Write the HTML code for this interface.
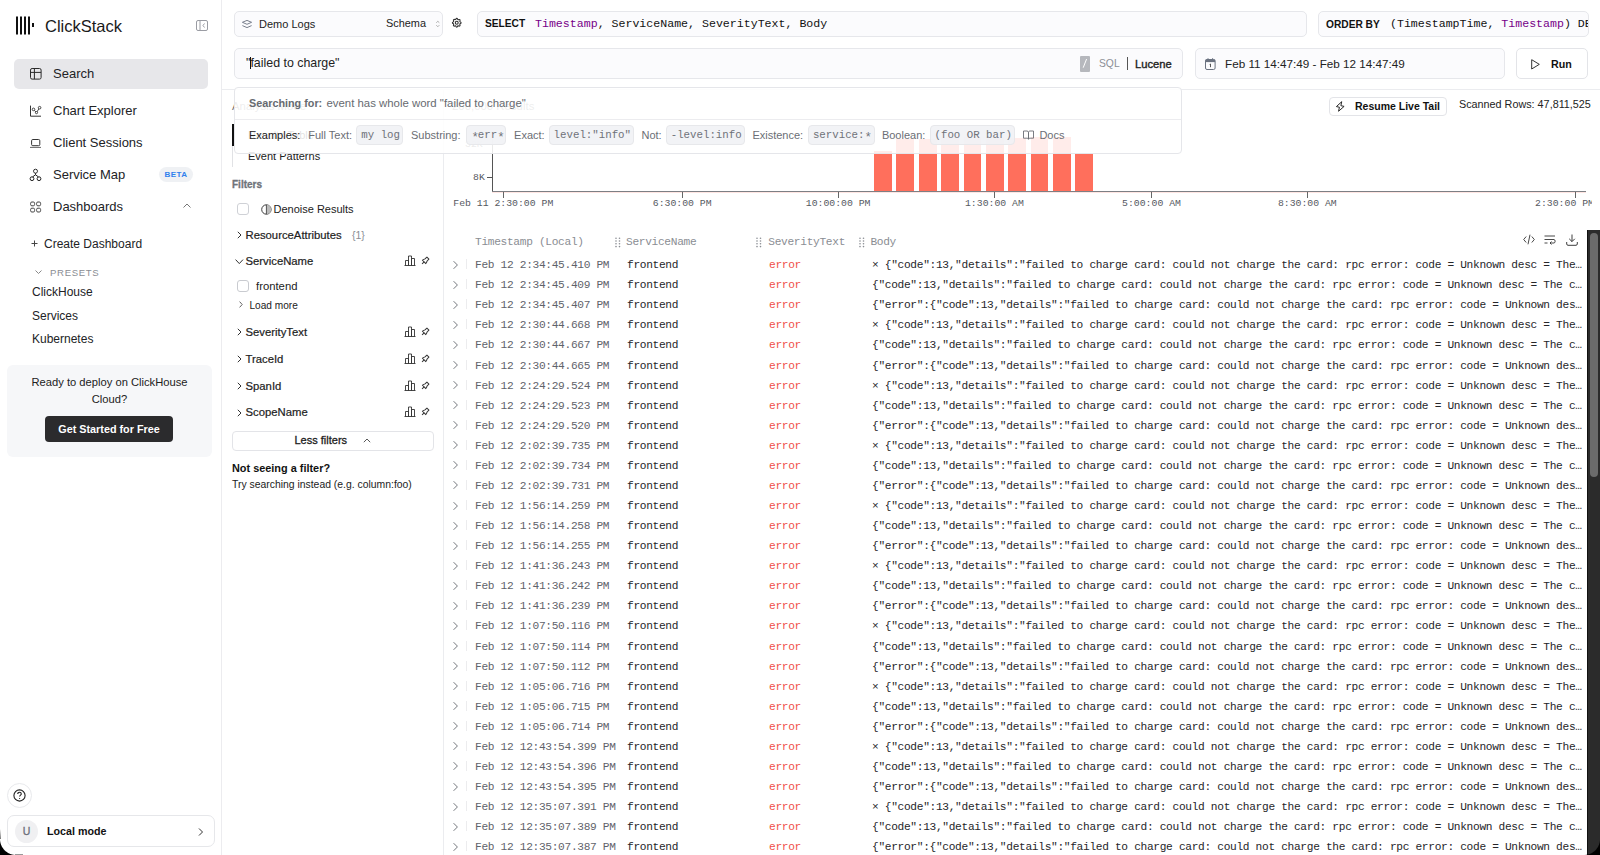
<!DOCTYPE html>
<html><head><meta charset="utf-8"><title>ClickStack Search</title>
<style>
*{box-sizing:border-box;margin:0;padding:0}
html,body{width:1600px;height:855px;overflow:hidden;background:#fff}
body{position:relative;font-family:"Liberation Sans",sans-serif;color:#1f1f22}
.a{position:absolute;white-space:nowrap}
.t{position:absolute;white-space:nowrap;line-height:16px;height:16px}
.mono{font-family:"Liberation Mono",monospace}
.med{-webkit-text-stroke:.25px currentColor}
svg{position:absolute;overflow:visible}
/* sidebar */
#side{position:absolute;left:0;top:0;width:222px;height:855px;border-right:1px solid #ececef;background:#fff}
.nav{font-size:13px;color:#222326}
.sub{font-size:12px;color:#222326}
/* header boxes */
.box{position:absolute;background:#fbfbfd;border:1px solid #e6e7eb;border-radius:5px}
/* rows */
.row{position:absolute;left:444px;width:1143px;height:20px;font-family:"Liberation Mono",monospace;font-size:11.2px;letter-spacing:-.32px;line-height:20px}
.row span{position:absolute;top:0;white-space:nowrap}
.rchev{left:8.5px;top:4.5px}
.rdiv{position:absolute;left:22px;top:4px;width:1px;height:10px;background:#ececee}
.ts{left:31px;color:#5f636b}
.sv{left:183px;color:#26262a}
.er{left:325px;color:#f0504a}
.bd{left:428px;color:#26262a}
.bar{position:absolute;width:17.8px;background:#ff6f5c}
.tick{position:absolute;top:192px;width:1px;height:6px;background:#666}
.tlab{position:absolute;top:197px;transform:translateX(-50%);font-family:"Liberation Mono",monospace;font-size:9.8px;color:#56595f;line-height:14px;white-space:nowrap}
</style></head>
<body>
<!-- SIDEBAR -->
<div id="side">
  <svg style="left:16px;top:16px" width="20" height="19" viewBox="0 0 20 19">
    <rect x="0" y="0.5" width="2" height="18" fill="#111"/>
    <rect x="4" y="0.5" width="2" height="18" fill="#111"/>
    <rect x="8" y="0.5" width="2" height="18" fill="#111"/>
    <rect x="12" y="0.5" width="2" height="18" fill="#111"/>
    <rect x="16" y="7" width="2" height="4" fill="#111"/>
  </svg>
  <div class="t" style="left:45px;top:17px;font-size:16.5px;line-height:18px;height:18px;color:#1a1a1a">ClickStack</div>
  <svg style="left:196px;top:20px" width="12" height="11" viewBox="0 0 12 11"><rect x="0.5" y="0.5" width="11" height="10" rx="1.5" fill="none" stroke="#9a9ca3" stroke-width="1"/><line x1="4" y1="1" x2="4" y2="10" stroke="#9a9ca3"/><path d="M8.5 3.5L7 5.5L8.5 7.5" fill="none" stroke="#9a9ca3"/></svg>

  <div class="a" style="left:14px;top:59px;width:194px;height:30px;background:#e7e7ea;border-radius:5px"></div>
  <svg style="left:30px;top:68px" width="12" height="12" viewBox="0 0 12 12"><rect x="0.5" y="0.5" width="10.6" height="10.6" rx="1.6" fill="none" stroke="#2a2a2a" stroke-width="1"/><line x1="0.5" y1="4.4" x2="11.1" y2="4.4" stroke="#2a2a2a"/><line x1="4.4" y1="0.5" x2="4.4" y2="11.1" stroke="#2a2a2a"/></svg>
  <div class="t nav" style="left:53px;top:66px">Search</div>

  <svg style="left:30px;top:105px" width="12" height="12" viewBox="0 0 12 12"><path d="M0.5 0.6V11.2H11" fill="none" stroke="#333" stroke-width="1"/><path d="M3.5 4.4L6.5 7.6L9.6 2.7" fill="none" stroke="#333" stroke-width=".9"/><circle cx="3.5" cy="4.4" r="1.3" fill="#fff" stroke="#333" stroke-width=".9"/><circle cx="6.5" cy="7.6" r="1.1" fill="#fff" stroke="#333" stroke-width=".9"/><circle cx="9.6" cy="2.7" r="1.3" fill="#fff" stroke="#333" stroke-width=".9"/></svg>
  <div class="t nav" style="left:53px;top:103px">Chart Explorer</div>

  <svg style="left:30px;top:138px" width="12" height="10" viewBox="0 0 12 10"><rect x="1.6" y="1.5" width="8.2" height="6.2" rx="1.2" fill="none" stroke="#333" stroke-width="1"/><line x1="0" y1="9.4" x2="11" y2="9.4" stroke="#555" stroke-width=".9"/></svg>
  <div class="t nav" style="left:53px;top:135px">Client Sessions</div>

  <svg style="left:30px;top:168px" width="12" height="12" viewBox="0 0 12 12"><circle cx="5.5" cy="3.2" r="2" fill="none" stroke="#333" stroke-width="1"/><circle cx="2" cy="10.7" r="1.9" fill="none" stroke="#222" stroke-width="1"/><circle cx="9" cy="10.7" r="1.9" fill="none" stroke="#222" stroke-width="1"/><path d="M5.5 5.2V6.8M5.5 6.8L2.6 8.9M5.5 6.8L8.4 8.9" fill="none" stroke="#222" stroke-width="1"/></svg>
  <div class="t nav" style="left:53px;top:167px">Service Map</div>
  <div class="a" style="left:159px;top:167px;width:34px;height:15px;border-radius:8px;background:#eff1f4;color:#2f80ed;font-size:8px;font-weight:bold;line-height:15px;text-align:center;letter-spacing:.4px">BETA</div>

  <svg style="left:30px;top:201px" width="12" height="12" viewBox="0 0 12 12"><rect x="0.6" y="1" width="4" height="3.8" rx="1.3" fill="none" stroke="#444"/><rect x="6.6" y="1" width="4" height="3.8" rx="1.3" fill="none" stroke="#444"/><rect x="0.6" y="7.2" width="4" height="3.8" rx="1.3" fill="none" stroke="#444"/><rect x="6.6" y="7.2" width="4" height="3.8" rx="1.3" fill="none" stroke="#444"/></svg>
  <div class="t nav" style="left:53px;top:199px">Dashboards</div>
  <svg style="left:183px;top:203px" width="8" height="5" viewBox="0 0 8 5"><path d="M0.5 4.5L4 1L7.5 4.5" fill="none" stroke="#777"/></svg>

  <svg style="left:31px;top:240px" width="7" height="7" viewBox="0 0 7 7"><path d="M3.5 0.5V6.5M0.5 3.5H6.5" stroke="#444" stroke-width="1"/></svg>
  <div class="t sub" style="left:44px;top:236px">Create Dashboard</div>

  <svg style="left:35px;top:270px" width="7" height="5" viewBox="0 0 7 5"><path d="M0.5 0.5L3.5 3.5L6.5 0.5" fill="none" stroke="#888"/></svg>
  <div class="t" style="left:50px;top:265px;font-size:9.6px;letter-spacing:.65px;color:#8a8d93">PRESETS</div>
  <div class="t sub" style="left:32px;top:284px">ClickHouse</div>
  <div class="t sub" style="left:32px;top:308px">Services</div>
  <div class="t sub" style="left:32px;top:331px">Kubernetes</div>

  <div class="a" style="left:7px;top:365px;width:205px;height:92px;background:#f6f7f9;border-radius:6px"></div>
  <div class="t" style="left:7px;width:205px;text-align:center;top:374px;font-size:11.2px;color:#222">Ready to deploy on ClickHouse</div>
  <div class="t" style="left:7px;width:205px;text-align:center;top:391px;font-size:11.2px;color:#222">Cloud?</div>
  <div class="a" style="left:45px;top:416px;width:128px;height:26px;background:#2b2b2d;border-radius:4px;color:#fff;font-weight:bold;font-size:10.8px;line-height:26px;text-align:center">Get Started for Free</div>

  <div class="a" style="left:7px;top:783px;width:25px;height:25px;border-radius:50%;border:1px solid #e8e9ec"></div>
  <svg style="left:13px;top:789px" width="13" height="13" viewBox="0 0 13 13"><circle cx="6.5" cy="6.5" r="5.6" fill="none" stroke="#222" stroke-width="1.1"/><path d="M4.7 5.1C4.7 3.9 5.5 3.3 6.5 3.3C7.5 3.3 8.3 3.9 8.3 4.9C8.3 6 6.6 6.2 6.6 7.6" fill="none" stroke="#222" stroke-width="1.1"/><circle cx="6.6" cy="9.5" r=".6" fill="#222"/></svg>
  <div class="a" style="left:7px;top:815px;width:208px;height:32px;border-radius:7px;border:1px solid #e6e7ea"></div>
  <div class="a" style="left:15px;top:820px;width:23px;height:23px;border-radius:50%;background:#f0f0f2;color:#6b6f7a;font-size:10.5px;-webkit-text-stroke:.3px #6b6f7a;line-height:23px;text-align:center">U</div>
  <div class="t" style="left:47px;top:823px;font-size:10.7px;font-weight:bold;color:#111">Local mode</div>
  <svg style="left:198px;top:828px" width="6" height="8" viewBox="0 0 6 8"><path d="M1 0.5L4.5 4L1 7.5" fill="none" stroke="#333"/></svg>
</div>


<!-- HEADER -->
<div class="box" style="left:234px;top:11px;width:209px;height:26px"></div>
<svg style="left:242px;top:20px" width="11" height="9" viewBox="0 0 11 9"><path d="M5 0.4L9.6 2.3L5 4.3L0.4 2.3Z" fill="none" stroke="#6b7280" stroke-width=".9" stroke-linejoin="round"/><path d="M0.4 5.6L5 7.6L9.6 5.6" fill="none" stroke="#6b7280" stroke-width=".9" stroke-linejoin="round"/></svg>
<div class="t" style="left:259px;top:16px;font-size:11px;color:#222">Demo Logs</div>
<div class="t" style="left:386px;top:15px;font-size:10.9px;color:#222">Schema</div>
<svg style="left:436px;top:21px" width="4" height="6" viewBox="0 0 4 6"><path d="M0.3 1.7L1.8 0.3L3.3 1.7M0.3 4.2L1.8 5.7L3.3 4.2" fill="none" stroke="#999" stroke-width=".8"/></svg>
<svg style="left:451.3px;top:16.5px" width="11.5" height="11.5" viewBox="0 0 24 24"><path d="M10.3 4.3c.4-1.8 3-1.8 3.4 0a1.7 1.7 0 0 0 2.6 1.1c1.5-.9 3.3.8 2.4 2.4a1.7 1.7 0 0 0 1 2.5c1.8.4 1.8 3 0 3.4a1.7 1.7 0 0 0-1 2.6c.9 1.5-.9 3.3-2.4 2.4a1.7 1.7 0 0 0-2.6 1c-.4 1.8-3 1.8-3.4 0a1.7 1.7 0 0 0-2.6-1c-1.5.9-3.3-.9-2.4-2.4a1.7 1.7 0 0 0-1-2.6c-1.8-.4-1.8-3 0-3.4a1.7 1.7 0 0 0 1-2.6c-.9-1.5.9-3.3 2.4-2.4 1 .6 2.3.1 2.6-1z" fill="none" stroke="#333" stroke-width="2.3"/><circle cx="12" cy="12" r="3" fill="none" stroke="#333" stroke-width="2.3"/></svg>

<div class="box" style="left:477px;top:11px;width:830px;height:26px"></div>
<div class="t" style="left:485px;top:16px;font-size:10.2px;font-weight:bold;color:#111">SELECT</div>
<div class="t mono" style="left:535px;top:16px;font-size:11.6px;color:#111"><span style="color:#770088">Timestamp</span>, ServiceName, SeverityText, Body</div>

<div class="box" style="left:1318px;top:11px;width:271px;height:26px;overflow:hidden">
 <div class="t" style="left:7px;top:4.5px;font-size:10.2px;font-weight:bold;color:#111">ORDER BY</div>
 <div class="t mono" style="left:71px;top:4px;font-size:11.6px;color:#111">(TimestampTime, <span style="color:#770088">Timestamp</span>) DESC</div>
</div>

<div class="box" style="left:234px;top:48px;width:949px;height:31px"></div>
<div class="t" style="left:246px;top:55px;font-size:12.4px;color:#222">"failed to charge"</div>
<div class="a" style="left:250px;top:57px;width:1px;height:12px;background:#111"></div>
<div class="a" style="left:1080px;top:56px;width:10px;height:15.5px;background:#b6b8bd;border-radius:1px"></div>
<svg style="left:1082px;top:58px" width="6" height="11" viewBox="0 0 6 11"><path d="M4.6 1L1.2 9.7" stroke="#fff" stroke-width="1"/></svg>
<div class="t" style="left:1099px;top:56px;font-size:10.3px;color:#8c8f96">SQL</div>
<div class="a" style="left:1127px;top:57px;width:1px;height:13px;background:#555"></div>
<div class="t" style="left:1135px;top:56px;font-size:11.2px;color:#222;-webkit-text-stroke:.35px #222">Lucene</div>

<div class="box" style="left:1195px;top:48px;width:310px;height:31px"></div>
<svg style="left:1205px;top:58px" width="11" height="12" viewBox="0 0 11 12"><rect x="0.5" y="1.5" width="9.6" height="10" rx="1.5" fill="none" stroke="#6b7280" stroke-width="1"/><rect x="0.5" y="1.5" width="9.6" height="2.6" fill="#6b7280"/><path d="M3 0.2V2M7.6 0.2V2" stroke="#6b7280"/><path d="M4.7 6.4L5.5 6V9.2" fill="none" stroke="#444" stroke-width=".9"/></svg>
<div class="t" style="left:1225px;top:56px;font-size:11.7px;color:#222">Feb 11 14:47:49 - Feb 12 14:47:49</div>

<div class="a" style="left:1516px;top:48px;width:72px;height:31px;border:1px solid #e3e4e8;border-radius:5px;background:#fff"></div>
<svg style="left:1531px;top:58.5px" width="9" height="11" viewBox="0 0 9 11"><path d="M0.7 0.7V10L8.3 5.35Z" fill="none" stroke="#333" stroke-width="1" stroke-linejoin="round"/></svg>
<div class="t" style="left:1551px;top:56px;font-size:10.7px;font-weight:bold;color:#111">Run</div>

<div class="a" style="left:222px;top:89px;width:1378px;height:1px;background:#ebecef"></div>

<!-- left filter panel -->
<div class="a" style="left:443px;top:90px;width:1px;height:765px;background:#ebecef"></div>
<div class="t" style="left:232px;top:98px;font-size:11.4px;color:#777">Analysis Mode</div>
<div class="a" style="left:232px;top:124px;width:1px;height:43px;background:#e1e2e5"></div>
<div class="a" style="left:232px;top:124px;width:2px;height:22px;background:#111"></div>
<div class="t" style="left:248px;top:127px;font-size:11px;color:#222">Results Table</div>
<div class="t" style="left:248px;top:148px;font-size:11px;color:#222">Event Patterns</div>

<div class="t" style="left:232px;top:177px;font-size:10px;font-weight:bold;color:#6f737a;-webkit-text-stroke:.3px #6f737a">Filters</div>
<div class="a" style="left:237px;top:203px;width:12px;height:12px;border:1px solid #cfd1d6;border-radius:3px"></div>
<svg style="left:260.5px;top:203.5px" width="11" height="11" viewBox="0 0 11 11"><circle cx="5.4" cy="5.5" r="4.7" fill="none" stroke="#333" stroke-width=".95"/><path d="M5.4 0.8A4.7 4.7 0 0 1 5.4 10.2Z" fill="#bbb"/><path d="M5.4 0.8V10.2" stroke="#333" stroke-width=".8"/></svg>
<div class="t" style="left:273.5px;top:201px;font-size:11px;color:#222">Denoise Results</div>

<svg style="left:237px;top:231px" width="5" height="8" viewBox="0 0 5 8"><path d="M0.8 0.8L4 4L0.8 7.2" fill="none" stroke="#333" stroke-width="1"/></svg>
<div class="t" style="left:245.5px;top:227px;font-size:11.3px;color:#222;-webkit-text-stroke:.2px #222">ResourceAttributes</div>
<div class="t" style="left:352px;top:227px;font-size:10.5px;color:#8a8d94">{1}</div>

<svg style="left:234.5px;top:259px" width="9" height="6" viewBox="0 0 9 6"><path d="M0.6 0.6L4.3 4.6L8 0.6" fill="none" stroke="#333" stroke-width="1"/></svg>
<div class="t" style="left:245.5px;top:253px;font-size:11.3px;color:#222;-webkit-text-stroke:.2px #222">ServiceName</div>
<div class="a" style="left:237px;top:280px;width:12px;height:12px;border:1px solid #c9cbd0;border-radius:3px"></div>
<div class="t" style="left:256px;top:278px;font-size:11.3px;color:#222">frontend</div>
<svg style="left:239px;top:301px" width="4" height="7" viewBox="0 0 4 7"><path d="M0.6 0.6L3.2 3.5L0.6 6.4" fill="none" stroke="#555" stroke-width=".9"/></svg>
<div class="t" style="left:249.5px;top:298px;font-size:10.1px;color:#222">Load more</div>

<svg style="left:237px;top:328px" width="5" height="8" viewBox="0 0 5 8"><path d="M0.8 0.8L4 4L0.8 7.2" fill="none" stroke="#333" stroke-width="1"/></svg>
<div class="t" style="left:245.5px;top:324px;font-size:11.3px;color:#222;-webkit-text-stroke:.2px #222">SeverityText</div>
<svg style="left:237px;top:355px" width="5" height="8" viewBox="0 0 5 8"><path d="M0.8 0.8L4 4L0.8 7.2" fill="none" stroke="#333" stroke-width="1"/></svg>
<div class="t" style="left:245.5px;top:351px;font-size:11.3px;color:#222;-webkit-text-stroke:.2px #222">TraceId</div>
<svg style="left:237px;top:382px" width="5" height="8" viewBox="0 0 5 8"><path d="M0.8 0.8L4 4L0.8 7.2" fill="none" stroke="#333" stroke-width="1"/></svg>
<div class="t" style="left:245.5px;top:378px;font-size:11.3px;color:#222;-webkit-text-stroke:.2px #222">SpanId</div>
<svg style="left:237px;top:409px" width="5" height="8" viewBox="0 0 5 8"><path d="M0.8 0.8L4 4L0.8 7.2" fill="none" stroke="#333" stroke-width="1"/></svg>
<div class="t" style="left:245.5px;top:404px;font-size:11.3px;color:#222;-webkit-text-stroke:.2px #222">ScopeName</div>
<svg style="left:404px;top:255.3px" width="12" height="11" viewBox="0 0 12 11"><path d="M0.5 10.5H11.5M1.5 10.5V5.5H4.5V10.5M4.5 10.5V1H7.5V10.5M7.5 10.5V3.5H10.5V10.5" fill="none" stroke="#333" stroke-width=".9"/></svg>
<svg style="left:420px;top:255.3px" width="11" height="11" viewBox="0 0 24 24"><path d="M15 4.5l-4 4l-4 1.5l-1.5 1.5l7 7l1.5 -1.5l1.5 -4l4 -4" fill="none" stroke="#333" stroke-width="2.2"/><path d="M9 15l-4.5 4.5" stroke="#333" stroke-width="2.2"/><path d="M14.5 4l5.5 5.5" stroke="#333" stroke-width="2.2"/></svg>
<svg style="left:404px;top:326.4px" width="12" height="11" viewBox="0 0 12 11"><path d="M0.5 10.5H11.5M1.5 10.5V5.5H4.5V10.5M4.5 10.5V1H7.5V10.5M7.5 10.5V3.5H10.5V10.5" fill="none" stroke="#333" stroke-width=".9"/></svg>
<svg style="left:420px;top:326.4px" width="11" height="11" viewBox="0 0 24 24"><path d="M15 4.5l-4 4l-4 1.5l-1.5 1.5l7 7l1.5 -1.5l1.5 -4l4 -4" fill="none" stroke="#333" stroke-width="2.2"/><path d="M9 15l-4.5 4.5" stroke="#333" stroke-width="2.2"/><path d="M14.5 4l5.5 5.5" stroke="#333" stroke-width="2.2"/></svg>
<svg style="left:404px;top:352.7px" width="12" height="11" viewBox="0 0 12 11"><path d="M0.5 10.5H11.5M1.5 10.5V5.5H4.5V10.5M4.5 10.5V1H7.5V10.5M7.5 10.5V3.5H10.5V10.5" fill="none" stroke="#333" stroke-width=".9"/></svg>
<svg style="left:420px;top:352.7px" width="11" height="11" viewBox="0 0 24 24"><path d="M15 4.5l-4 4l-4 1.5l-1.5 1.5l7 7l1.5 -1.5l1.5 -4l4 -4" fill="none" stroke="#333" stroke-width="2.2"/><path d="M9 15l-4.5 4.5" stroke="#333" stroke-width="2.2"/><path d="M14.5 4l5.5 5.5" stroke="#333" stroke-width="2.2"/></svg>
<svg style="left:404px;top:379.7px" width="12" height="11" viewBox="0 0 12 11"><path d="M0.5 10.5H11.5M1.5 10.5V5.5H4.5V10.5M4.5 10.5V1H7.5V10.5M7.5 10.5V3.5H10.5V10.5" fill="none" stroke="#333" stroke-width=".9"/></svg>
<svg style="left:420px;top:379.7px" width="11" height="11" viewBox="0 0 24 24"><path d="M15 4.5l-4 4l-4 1.5l-1.5 1.5l7 7l1.5 -1.5l1.5 -4l4 -4" fill="none" stroke="#333" stroke-width="2.2"/><path d="M9 15l-4.5 4.5" stroke="#333" stroke-width="2.2"/><path d="M14.5 4l5.5 5.5" stroke="#333" stroke-width="2.2"/></svg>
<svg style="left:404px;top:406.3px" width="12" height="11" viewBox="0 0 12 11"><path d="M0.5 10.5H11.5M1.5 10.5V5.5H4.5V10.5M4.5 10.5V1H7.5V10.5M7.5 10.5V3.5H10.5V10.5" fill="none" stroke="#333" stroke-width=".9"/></svg>
<svg style="left:420px;top:406.3px" width="11" height="11" viewBox="0 0 24 24"><path d="M15 4.5l-4 4l-4 1.5l-1.5 1.5l7 7l1.5 -1.5l1.5 -4l4 -4" fill="none" stroke="#333" stroke-width="2.2"/><path d="M9 15l-4.5 4.5" stroke="#333" stroke-width="2.2"/><path d="M14.5 4l5.5 5.5" stroke="#333" stroke-width="2.2"/></svg>

<div class="a" style="left:232px;top:431px;width:202px;height:20px;border:1px solid #e3e4e8;border-radius:4px"></div>
<div class="t" style="left:294.5px;top:432px;font-size:11px;color:#222;-webkit-text-stroke:.3px #222">Less filters</div>
<svg style="left:363px;top:438px" width="8" height="5" viewBox="0 0 8 5"><path d="M0.8 4.2L4 1L7.2 4.2" fill="none" stroke="#444" stroke-width=".9"/></svg>
<div class="t" style="left:232px;top:460px;font-size:10.9px;font-weight:bold;color:#111">Not seeing a filter?</div>
<div class="t" style="left:232px;top:477px;font-size:10.4px;color:#222">Try searching instead (e.g. column:foo)</div>

<!-- chart area -->
<div class="t" style="left:452px;top:97.5px;font-size:11.4px;color:#777">200,000 Results</div>
<div class="t mono" style="left:465px;top:137px;font-size:9.8px;color:#666">32K</div>
<div class="a" style="left:492px;top:137px;width:1px;height:55px;background:#555"></div>
<div class="t mono" style="left:473px;top:170px;font-size:9.8px;color:#56595f">8K</div>
<div class="a" style="left:487px;top:177px;width:5px;height:1px;background:#555"></div>
<div class="bar" style="left:874.10px;top:150.6px;height:40.90px"></div>
<div class="bar" style="left:896.45px;top:138.9px;height:52.60px"></div>
<div class="bar" style="left:918.80px;top:139px;height:52.50px"></div>
<div class="bar" style="left:941.15px;top:137.3px;height:54.20px"></div>
<div class="bar" style="left:963.50px;top:137.3px;height:54.20px"></div>
<div class="bar" style="left:985.85px;top:137.3px;height:54.20px"></div>
<div class="bar" style="left:1008.20px;top:138px;height:53.50px"></div>
<div class="bar" style="left:1030.55px;top:137.3px;height:54.20px"></div>
<div class="bar" style="left:1052.90px;top:137.3px;height:54.20px"></div>
<div class="bar" style="left:1075.25px;top:154px;height:37.50px"></div>
<div class="a" style="left:492px;top:191px;width:1094px;height:1px;background:#7d7f84"></div><div class="a" style="left:492px;top:192px;width:1094px;height:1px;background:rgba(255,111,92,.18)"></div>
<div class="a" style="left:0;top:0;width:1592px;height:230px;overflow:hidden"><i class="tick" style="left:502.8px"></i><span class="tlab" style="left:503.3px">Feb 11 2:30:00 PM</span>
<i class="tick" style="left:681.7px"></i><span class="tlab" style="left:682.2px">6:30:00 PM</span>
<i class="tick" style="left:837.6px"></i><span class="tlab" style="left:838.1px">10:00:00 PM</span>
<i class="tick" style="left:993.9px"></i><span class="tlab" style="left:994.4px">1:30:00 AM</span>
<i class="tick" style="left:1151.0px"></i><span class="tlab" style="left:1151.5px">5:00:00 AM</span>
<i class="tick" style="left:1306.8px"></i><span class="tlab" style="left:1307.3px">8:30:00 AM</span>
<i class="tick" style="left:1574.5px"></i><span class="tlab" style="left:1564.5px">2:30:00 PM</span></div>

<div class="a" style="left:1329px;top:97px;width:118px;height:19px;border:1px solid #e3e4e8;border-radius:4px;background:#fff"></div>
<svg style="left:1335.5px;top:101px" width="9" height="11" viewBox="0 0 9 11"><path d="M4.7 0.5V4.6H8L3.6 10.5V6.4H0.5Z" fill="none" stroke="#222" stroke-width=".9" stroke-linejoin="round" transform="rotate(12 4.3 5.5)"/></svg>
<div class="t" style="left:1355px;top:98px;font-size:10.5px;font-weight:bold;color:#111">Resume Live Tail</div>
<div class="t" style="left:1459px;top:96px;font-size:10.8px;color:#222">Scanned Rows: 47,811,525</div>

<!-- popover -->
<div class="a" style="left:234px;top:87px;width:948px;height:67px;background:rgba(255,255,255,.87);border:1px solid #e5e6ea;border-radius:4px"></div>
<div class="a" style="left:235px;top:119px;width:946px;height:1px;background:#ececef"></div>
<div class="t" style="left:249px;top:95px;font-size:10.8px;font-weight:bold;color:#666a70">Searching for:</div>
<div class="t" style="left:326.5px;top:95px;font-size:11.4px;color:#666a70">event has whole word "failed to charge"</div>
<div class="t" style="left:249px;top:127px;font-size:11px;color:#222">Examples:</div>
<div class="t" style="left:308.2px;top:127px;font-size:11px;color:#6b6e75">Full Text:</div>
<div class="a" style="left:356.3px;top:125px;width:46.7px;height:20px;background:rgba(241,242,245,.9);border:1px solid #e7e8eb;border-radius:4px"></div><div class="t mono" style="left:361.3px;top:127px;font-size:10.75px;color:#6f7279">my log</div>
<div class="t" style="left:411px;top:127px;font-size:11px;color:#6b6e75">Substring:</div>
<div class="a" style="left:466.4px;top:125px;width:39.6px;height:20px;background:rgba(241,242,245,.9);border:1px solid #e7e8eb;border-radius:4px"></div><div class="t mono" style="left:471.4px;top:127px;font-size:10.75px;color:#6f7279"><span style="position:relative;top:2.5px;font-size:12.5px;display:inline-block;width:6.45px;text-align:center">*</span>err<span style="position:relative;top:2.5px;font-size:12.5px;display:inline-block;width:6.45px;text-align:center">*</span></div>
<div class="t" style="left:514.1px;top:127px;font-size:11px;color:#6b6e75">Exact:</div>
<div class="a" style="left:548.6px;top:125px;width:85.4px;height:20px;background:rgba(241,242,245,.9);border:1px solid #e7e8eb;border-radius:4px"></div><div class="t mono" style="left:553.6px;top:127px;font-size:10.75px;color:#6f7279">level:"info"</div>
<div class="t" style="left:641.5px;top:127px;font-size:11px;color:#6b6e75">Not:</div>
<div class="a" style="left:665.7px;top:125px;width:79.5px;height:20px;background:rgba(241,242,245,.9);border:1px solid #e7e8eb;border-radius:4px"></div><div class="t mono" style="left:670.7px;top:127px;font-size:10.75px;color:#6f7279">-level:info</div>
<div class="t" style="left:752.4px;top:127px;font-size:11px;color:#6b6e75">Existence:</div>
<div class="a" style="left:807.9px;top:125px;width:67.0px;height:20px;background:rgba(241,242,245,.9);border:1px solid #e7e8eb;border-radius:4px"></div><div class="t mono" style="left:812.9px;top:127px;font-size:10.75px;color:#6f7279">service:<span style="position:relative;top:2.5px;font-size:12.5px;display:inline-block;width:6.45px;text-align:center">*</span></div>
<div class="t" style="left:881.9px;top:127px;font-size:11px;color:#6b6e75">Boolean:</div>
<div class="a" style="left:929.5px;top:125px;width:85.2px;height:20px;background:rgba(241,242,245,.9);border:1px solid #e7e8eb;border-radius:4px"></div><div class="t mono" style="left:934.5px;top:127px;font-size:10.75px;color:#6f7279">(foo OR bar)</div>
<svg style="left:1023px;top:130px" width="11" height="10" viewBox="0 0 11 10"><path d="M0.5 1H4C4.8 1 5.5 1.6 5.5 2.4V9.2C5.5 8.6 4.9 8.2 4.2 8.2H0.5Z M10.5 1H7C6.2 1 5.5 1.6 5.5 2.4V9.2C5.5 8.6 6.1 8.2 6.8 8.2H10.5Z" fill="none" stroke="#6b6e75" stroke-width=".9"/></svg>
<div class="t" style="left:1039.4px;top:127px;font-size:11px;color:#6b6e75">Docs</div>

<!-- table -->
<div class="t mono" style="left:475px;top:234px;font-size:11.2px;letter-spacing:-.32px;color:#8a8d93">Timestamp (Local)</div>
<svg style="left:614.5px;top:237px" width="6" height="10" viewBox="0 0 6 10"><g fill="#8a8d93"><circle cx="1" cy="1.2" r=".8"/><circle cx="4.5" cy="1.2" r=".8"/><circle cx="1" cy="4" r=".8"/><circle cx="4.5" cy="4" r=".8"/><circle cx="1" cy="6.8" r=".8"/><circle cx="4.5" cy="6.8" r=".8"/><circle cx="1" cy="9.6" r=".8"/><circle cx="4.5" cy="9.6" r=".8"/></g></svg>
<div class="t mono" style="left:626px;top:234px;font-size:11.2px;letter-spacing:-.32px;color:#8a8d93">ServiceName</div>
<svg style="left:756.3px;top:237px" width="6" height="10" viewBox="0 0 6 10"><g fill="#8a8d93"><circle cx="1" cy="1.2" r=".8"/><circle cx="4.5" cy="1.2" r=".8"/><circle cx="1" cy="4" r=".8"/><circle cx="4.5" cy="4" r=".8"/><circle cx="1" cy="6.8" r=".8"/><circle cx="4.5" cy="6.8" r=".8"/><circle cx="1" cy="9.6" r=".8"/><circle cx="4.5" cy="9.6" r=".8"/></g></svg>
<div class="t mono" style="left:768.3px;top:234px;font-size:11.2px;letter-spacing:-.32px;color:#8a8d93">SeverityText</div>
<svg style="left:859px;top:237px" width="6" height="10" viewBox="0 0 6 10"><g fill="#8a8d93"><circle cx="1" cy="1.2" r=".8"/><circle cx="4.5" cy="1.2" r=".8"/><circle cx="1" cy="4" r=".8"/><circle cx="4.5" cy="4" r=".8"/><circle cx="1" cy="6.8" r=".8"/><circle cx="4.5" cy="6.8" r=".8"/><circle cx="1" cy="9.6" r=".8"/><circle cx="4.5" cy="9.6" r=".8"/></g></svg>
<div class="t mono" style="left:870.4px;top:234px;font-size:11.2px;letter-spacing:-.32px;color:#8a8d93">Body</div>
<div class="row" style="top:255.20px"><svg class="rchev" width="8" height="10" viewBox="0 0 8 10"><path d="M0.6 1.2L4.4 5L0.6 8.8" fill="none" stroke="#5b5f66" stroke-width=".85"/></svg><i class="rdiv"></i><span class="ts">Feb 12 2:34:45.410 PM</span><span class="sv">frontend</span><span class="er">error</span><span class="bd">× {"code":13,"details":"failed to charge card: could not charge the card: rpc error: code = Unknown desc = The…</span></div>
<div class="row" style="top:275.27px"><svg class="rchev" width="8" height="10" viewBox="0 0 8 10"><path d="M0.6 1.2L4.4 5L0.6 8.8" fill="none" stroke="#5b5f66" stroke-width=".85"/></svg><i class="rdiv"></i><span class="ts">Feb 12 2:34:45.409 PM</span><span class="sv">frontend</span><span class="er">error</span><span class="bd">{"code":13,"details":"failed to charge card: could not charge the card: rpc error: code = Unknown desc = The c…</span></div>
<div class="row" style="top:295.34px"><svg class="rchev" width="8" height="10" viewBox="0 0 8 10"><path d="M0.6 1.2L4.4 5L0.6 8.8" fill="none" stroke="#5b5f66" stroke-width=".85"/></svg><i class="rdiv"></i><span class="ts">Feb 12 2:34:45.407 PM</span><span class="sv">frontend</span><span class="er">error</span><span class="bd">{"error":{"code":13,"details":"failed to charge card: could not charge the card: rpc error: code = Unknown des…</span></div>
<div class="row" style="top:315.41px"><svg class="rchev" width="8" height="10" viewBox="0 0 8 10"><path d="M0.6 1.2L4.4 5L0.6 8.8" fill="none" stroke="#5b5f66" stroke-width=".85"/></svg><i class="rdiv"></i><span class="ts">Feb 12 2:30:44.668 PM</span><span class="sv">frontend</span><span class="er">error</span><span class="bd">× {"code":13,"details":"failed to charge card: could not charge the card: rpc error: code = Unknown desc = The…</span></div>
<div class="row" style="top:335.48px"><svg class="rchev" width="8" height="10" viewBox="0 0 8 10"><path d="M0.6 1.2L4.4 5L0.6 8.8" fill="none" stroke="#5b5f66" stroke-width=".85"/></svg><i class="rdiv"></i><span class="ts">Feb 12 2:30:44.667 PM</span><span class="sv">frontend</span><span class="er">error</span><span class="bd">{"code":13,"details":"failed to charge card: could not charge the card: rpc error: code = Unknown desc = The c…</span></div>
<div class="row" style="top:355.55px"><svg class="rchev" width="8" height="10" viewBox="0 0 8 10"><path d="M0.6 1.2L4.4 5L0.6 8.8" fill="none" stroke="#5b5f66" stroke-width=".85"/></svg><i class="rdiv"></i><span class="ts">Feb 12 2:30:44.665 PM</span><span class="sv">frontend</span><span class="er">error</span><span class="bd">{"error":{"code":13,"details":"failed to charge card: could not charge the card: rpc error: code = Unknown des…</span></div>
<div class="row" style="top:375.62px"><svg class="rchev" width="8" height="10" viewBox="0 0 8 10"><path d="M0.6 1.2L4.4 5L0.6 8.8" fill="none" stroke="#5b5f66" stroke-width=".85"/></svg><i class="rdiv"></i><span class="ts">Feb 12 2:24:29.524 PM</span><span class="sv">frontend</span><span class="er">error</span><span class="bd">× {"code":13,"details":"failed to charge card: could not charge the card: rpc error: code = Unknown desc = The…</span></div>
<div class="row" style="top:395.69px"><svg class="rchev" width="8" height="10" viewBox="0 0 8 10"><path d="M0.6 1.2L4.4 5L0.6 8.8" fill="none" stroke="#5b5f66" stroke-width=".85"/></svg><i class="rdiv"></i><span class="ts">Feb 12 2:24:29.523 PM</span><span class="sv">frontend</span><span class="er">error</span><span class="bd">{"code":13,"details":"failed to charge card: could not charge the card: rpc error: code = Unknown desc = The c…</span></div>
<div class="row" style="top:415.76px"><svg class="rchev" width="8" height="10" viewBox="0 0 8 10"><path d="M0.6 1.2L4.4 5L0.6 8.8" fill="none" stroke="#5b5f66" stroke-width=".85"/></svg><i class="rdiv"></i><span class="ts">Feb 12 2:24:29.520 PM</span><span class="sv">frontend</span><span class="er">error</span><span class="bd">{"error":{"code":13,"details":"failed to charge card: could not charge the card: rpc error: code = Unknown des…</span></div>
<div class="row" style="top:435.83px"><svg class="rchev" width="8" height="10" viewBox="0 0 8 10"><path d="M0.6 1.2L4.4 5L0.6 8.8" fill="none" stroke="#5b5f66" stroke-width=".85"/></svg><i class="rdiv"></i><span class="ts">Feb 12 2:02:39.735 PM</span><span class="sv">frontend</span><span class="er">error</span><span class="bd">× {"code":13,"details":"failed to charge card: could not charge the card: rpc error: code = Unknown desc = The…</span></div>
<div class="row" style="top:455.90px"><svg class="rchev" width="8" height="10" viewBox="0 0 8 10"><path d="M0.6 1.2L4.4 5L0.6 8.8" fill="none" stroke="#5b5f66" stroke-width=".85"/></svg><i class="rdiv"></i><span class="ts">Feb 12 2:02:39.734 PM</span><span class="sv">frontend</span><span class="er">error</span><span class="bd">{"code":13,"details":"failed to charge card: could not charge the card: rpc error: code = Unknown desc = The c…</span></div>
<div class="row" style="top:475.97px"><svg class="rchev" width="8" height="10" viewBox="0 0 8 10"><path d="M0.6 1.2L4.4 5L0.6 8.8" fill="none" stroke="#5b5f66" stroke-width=".85"/></svg><i class="rdiv"></i><span class="ts">Feb 12 2:02:39.731 PM</span><span class="sv">frontend</span><span class="er">error</span><span class="bd">{"error":{"code":13,"details":"failed to charge card: could not charge the card: rpc error: code = Unknown des…</span></div>
<div class="row" style="top:496.04px"><svg class="rchev" width="8" height="10" viewBox="0 0 8 10"><path d="M0.6 1.2L4.4 5L0.6 8.8" fill="none" stroke="#5b5f66" stroke-width=".85"/></svg><i class="rdiv"></i><span class="ts">Feb 12 1:56:14.259 PM</span><span class="sv">frontend</span><span class="er">error</span><span class="bd">× {"code":13,"details":"failed to charge card: could not charge the card: rpc error: code = Unknown desc = The…</span></div>
<div class="row" style="top:516.11px"><svg class="rchev" width="8" height="10" viewBox="0 0 8 10"><path d="M0.6 1.2L4.4 5L0.6 8.8" fill="none" stroke="#5b5f66" stroke-width=".85"/></svg><i class="rdiv"></i><span class="ts">Feb 12 1:56:14.258 PM</span><span class="sv">frontend</span><span class="er">error</span><span class="bd">{"code":13,"details":"failed to charge card: could not charge the card: rpc error: code = Unknown desc = The c…</span></div>
<div class="row" style="top:536.18px"><svg class="rchev" width="8" height="10" viewBox="0 0 8 10"><path d="M0.6 1.2L4.4 5L0.6 8.8" fill="none" stroke="#5b5f66" stroke-width=".85"/></svg><i class="rdiv"></i><span class="ts">Feb 12 1:56:14.255 PM</span><span class="sv">frontend</span><span class="er">error</span><span class="bd">{"error":{"code":13,"details":"failed to charge card: could not charge the card: rpc error: code = Unknown des…</span></div>
<div class="row" style="top:556.25px"><svg class="rchev" width="8" height="10" viewBox="0 0 8 10"><path d="M0.6 1.2L4.4 5L0.6 8.8" fill="none" stroke="#5b5f66" stroke-width=".85"/></svg><i class="rdiv"></i><span class="ts">Feb 12 1:41:36.243 PM</span><span class="sv">frontend</span><span class="er">error</span><span class="bd">× {"code":13,"details":"failed to charge card: could not charge the card: rpc error: code = Unknown desc = The…</span></div>
<div class="row" style="top:576.32px"><svg class="rchev" width="8" height="10" viewBox="0 0 8 10"><path d="M0.6 1.2L4.4 5L0.6 8.8" fill="none" stroke="#5b5f66" stroke-width=".85"/></svg><i class="rdiv"></i><span class="ts">Feb 12 1:41:36.242 PM</span><span class="sv">frontend</span><span class="er">error</span><span class="bd">{"code":13,"details":"failed to charge card: could not charge the card: rpc error: code = Unknown desc = The c…</span></div>
<div class="row" style="top:596.39px"><svg class="rchev" width="8" height="10" viewBox="0 0 8 10"><path d="M0.6 1.2L4.4 5L0.6 8.8" fill="none" stroke="#5b5f66" stroke-width=".85"/></svg><i class="rdiv"></i><span class="ts">Feb 12 1:41:36.239 PM</span><span class="sv">frontend</span><span class="er">error</span><span class="bd">{"error":{"code":13,"details":"failed to charge card: could not charge the card: rpc error: code = Unknown des…</span></div>
<div class="row" style="top:616.46px"><svg class="rchev" width="8" height="10" viewBox="0 0 8 10"><path d="M0.6 1.2L4.4 5L0.6 8.8" fill="none" stroke="#5b5f66" stroke-width=".85"/></svg><i class="rdiv"></i><span class="ts">Feb 12 1:07:50.116 PM</span><span class="sv">frontend</span><span class="er">error</span><span class="bd">× {"code":13,"details":"failed to charge card: could not charge the card: rpc error: code = Unknown desc = The…</span></div>
<div class="row" style="top:636.53px"><svg class="rchev" width="8" height="10" viewBox="0 0 8 10"><path d="M0.6 1.2L4.4 5L0.6 8.8" fill="none" stroke="#5b5f66" stroke-width=".85"/></svg><i class="rdiv"></i><span class="ts">Feb 12 1:07:50.114 PM</span><span class="sv">frontend</span><span class="er">error</span><span class="bd">{"code":13,"details":"failed to charge card: could not charge the card: rpc error: code = Unknown desc = The c…</span></div>
<div class="row" style="top:656.60px"><svg class="rchev" width="8" height="10" viewBox="0 0 8 10"><path d="M0.6 1.2L4.4 5L0.6 8.8" fill="none" stroke="#5b5f66" stroke-width=".85"/></svg><i class="rdiv"></i><span class="ts">Feb 12 1:07:50.112 PM</span><span class="sv">frontend</span><span class="er">error</span><span class="bd">{"error":{"code":13,"details":"failed to charge card: could not charge the card: rpc error: code = Unknown des…</span></div>
<div class="row" style="top:676.67px"><svg class="rchev" width="8" height="10" viewBox="0 0 8 10"><path d="M0.6 1.2L4.4 5L0.6 8.8" fill="none" stroke="#5b5f66" stroke-width=".85"/></svg><i class="rdiv"></i><span class="ts">Feb 12 1:05:06.716 PM</span><span class="sv">frontend</span><span class="er">error</span><span class="bd">× {"code":13,"details":"failed to charge card: could not charge the card: rpc error: code = Unknown desc = The…</span></div>
<div class="row" style="top:696.74px"><svg class="rchev" width="8" height="10" viewBox="0 0 8 10"><path d="M0.6 1.2L4.4 5L0.6 8.8" fill="none" stroke="#5b5f66" stroke-width=".85"/></svg><i class="rdiv"></i><span class="ts">Feb 12 1:05:06.715 PM</span><span class="sv">frontend</span><span class="er">error</span><span class="bd">{"code":13,"details":"failed to charge card: could not charge the card: rpc error: code = Unknown desc = The c…</span></div>
<div class="row" style="top:716.81px"><svg class="rchev" width="8" height="10" viewBox="0 0 8 10"><path d="M0.6 1.2L4.4 5L0.6 8.8" fill="none" stroke="#5b5f66" stroke-width=".85"/></svg><i class="rdiv"></i><span class="ts">Feb 12 1:05:06.714 PM</span><span class="sv">frontend</span><span class="er">error</span><span class="bd">{"error":{"code":13,"details":"failed to charge card: could not charge the card: rpc error: code = Unknown des…</span></div>
<div class="row" style="top:736.88px"><svg class="rchev" width="8" height="10" viewBox="0 0 8 10"><path d="M0.6 1.2L4.4 5L0.6 8.8" fill="none" stroke="#5b5f66" stroke-width=".85"/></svg><i class="rdiv"></i><span class="ts">Feb 12 12:43:54.399 PM</span><span class="sv">frontend</span><span class="er">error</span><span class="bd">× {"code":13,"details":"failed to charge card: could not charge the card: rpc error: code = Unknown desc = The…</span></div>
<div class="row" style="top:756.95px"><svg class="rchev" width="8" height="10" viewBox="0 0 8 10"><path d="M0.6 1.2L4.4 5L0.6 8.8" fill="none" stroke="#5b5f66" stroke-width=".85"/></svg><i class="rdiv"></i><span class="ts">Feb 12 12:43:54.396 PM</span><span class="sv">frontend</span><span class="er">error</span><span class="bd">{"code":13,"details":"failed to charge card: could not charge the card: rpc error: code = Unknown desc = The c…</span></div>
<div class="row" style="top:777.02px"><svg class="rchev" width="8" height="10" viewBox="0 0 8 10"><path d="M0.6 1.2L4.4 5L0.6 8.8" fill="none" stroke="#5b5f66" stroke-width=".85"/></svg><i class="rdiv"></i><span class="ts">Feb 12 12:43:54.395 PM</span><span class="sv">frontend</span><span class="er">error</span><span class="bd">{"error":{"code":13,"details":"failed to charge card: could not charge the card: rpc error: code = Unknown des…</span></div>
<div class="row" style="top:797.09px"><svg class="rchev" width="8" height="10" viewBox="0 0 8 10"><path d="M0.6 1.2L4.4 5L0.6 8.8" fill="none" stroke="#5b5f66" stroke-width=".85"/></svg><i class="rdiv"></i><span class="ts">Feb 12 12:35:07.391 PM</span><span class="sv">frontend</span><span class="er">error</span><span class="bd">× {"code":13,"details":"failed to charge card: could not charge the card: rpc error: code = Unknown desc = The…</span></div>
<div class="row" style="top:817.16px"><svg class="rchev" width="8" height="10" viewBox="0 0 8 10"><path d="M0.6 1.2L4.4 5L0.6 8.8" fill="none" stroke="#5b5f66" stroke-width=".85"/></svg><i class="rdiv"></i><span class="ts">Feb 12 12:35:07.389 PM</span><span class="sv">frontend</span><span class="er">error</span><span class="bd">{"code":13,"details":"failed to charge card: could not charge the card: rpc error: code = Unknown desc = The c…</span></div>
<div class="row" style="top:837.23px"><svg class="rchev" width="8" height="10" viewBox="0 0 8 10"><path d="M0.6 1.2L4.4 5L0.6 8.8" fill="none" stroke="#5b5f66" stroke-width=".85"/></svg><i class="rdiv"></i><span class="ts">Feb 12 12:35:07.387 PM</span><span class="sv">frontend</span><span class="er">error</span><span class="bd">{"error":{"code":13,"details":"failed to charge card: could not charge the card: rpc error: code = Unknown des…</span></div>
<svg style="left:1523px;top:234px" width="12" height="11" viewBox="0 0 12 11"><path d="M3.2 2.5L0.7 5.5L3.2 8.5M8.8 2.5L11.3 5.5L8.8 8.5M7 0.7L5 10.3" fill="none" stroke="#333" stroke-width=".9"/></svg><svg style="left:1544px;top:235px" width="12" height="11" viewBox="0 0 12 11"><path d="M0.5 1H11M0.5 4.5H10C11.5 4.5 11.5 8 10 8H6M7.5 6.5L6 8L7.5 9.5M0.5 8H3.5" fill="none" stroke="#333" stroke-width=".9"/></svg><svg style="left:1566px;top:234px" width="12" height="12" viewBox="0 0 12 12"><path d="M6 0.5V7.5M3.2 4.8L6 7.6L8.8 4.8M0.7 8V10C0.7 10.8 1.3 11.3 2 11.3H10C10.7 11.3 11.3 10.8 11.3 10V8" fill="none" stroke="#333" stroke-width=".95"/></svg>

<!-- scrollbar -->
<div class="a" style="left:1587px;top:230px;width:13px;height:625px;background:#2b2b2b;border-left:1px solid #111"></div>
<div class="a" style="left:1590px;top:233px;width:8px;height:244px;background:#6b6b6b;border-radius:4px"></div>

<!-- window corners -->
<div class="a" style="left:0;top:839px;width:16px;height:16px;background:radial-gradient(circle at 16px 0px, transparent 15.5px, #000 16.5px)"></div><div class="a" style="left:0;top:829px;width:1px;height:10px;background:linear-gradient(#fff,#777)"></div><div class="a" style="left:15px;top:854px;width:8px;height:1px;background:#999"></div>
<div class="a" style="left:1584px;top:839px;width:16px;height:16px;background:radial-gradient(circle at 0px 0px, transparent 15.5px, #000 16.5px)"></div>
</body></html>
